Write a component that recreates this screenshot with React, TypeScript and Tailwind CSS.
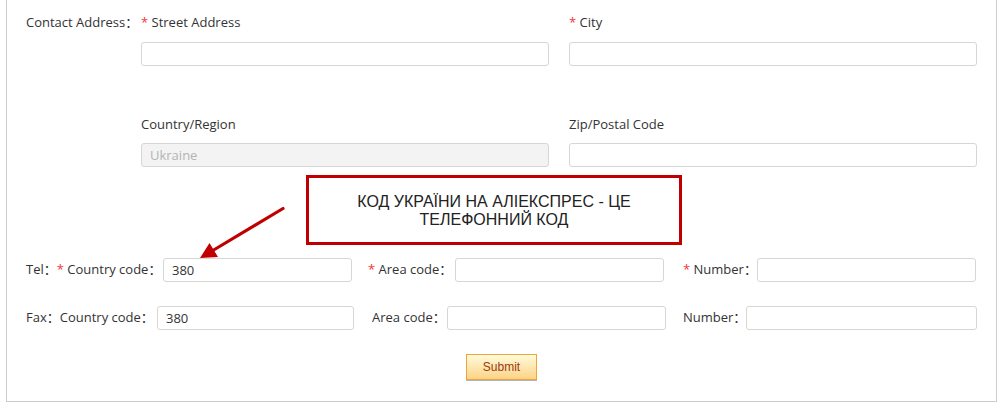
import React from "react";

const font = { fontFamily: "'Open Sans', 'Noto Sans CJK SC', sans-serif" };

function Star() {
  return <span className="text-[#f0353a]">*</span>;
}

function Field({ value, disabled, className }: { value?: string; disabled?: boolean; className?: string }) {
  return (
    <input
      readOnly
      defaultValue={value ?? ""}
      className={
        "h-[24px] rounded-[3px] border border-[#d6d6d6] px-[8px] text-[13px] outline-none " +
        (disabled ? "bg-[#f3f3f3] text-[#b3b3b3] " : "bg-white text-[#333] ") +
        (className ?? "")
      }
    />
  );
}

export default function App() {
  return (
    <div className="relative w-[1004px] h-[409px] bg-white text-[13px] text-[#333]" style={font}>
      <div className="ml-[6px] w-[991px] h-[402px] border-x border-b border-[#cccccc] pl-[19px]">
        {/* Address block */}
        <div className="flex">
          <div className="w-[115px] shrink-0 mt-[12px] leading-[20px] whitespace-nowrap">Contact Address：</div>
          <div className="grid grid-cols-2 gap-x-[20px] w-[836px]">
            <div>
              <div className="mt-[12px] leading-[20px] h-[20px]">
                <Star /> Street Address
              </div>
              <Field className="mt-[10px] w-full block" />
            </div>
            <div>
              <div className="mt-[12px] leading-[20px] h-[20px]">
                <Star /> City
              </div>
              <Field className="mt-[10px] w-full block" />
            </div>
            <div>
              <div className="mt-[48px] leading-[20px] h-[20px]">Country/Region</div>
              <Field value="Ukraine" disabled className="mt-[9px] w-full block" />
            </div>
            <div>
              <div className="mt-[48px] leading-[20px] h-[20px]">Zip/Postal Code</div>
              <Field className="mt-[9px] w-full block" />
            </div>
          </div>
        </div>

        {/* Tel row */}
        <div className="mt-[91px] flex items-center h-[24px] whitespace-nowrap">
          <div className="w-[326px] flex items-center justify-between">
            <span>
              Tel：<Star /> Country code：
            </span>
            <Field value="380" className="w-[189px]" />
          </div>
          <div className="ml-[16px] w-[296px] flex items-center justify-between">
            <span>
              <Star /> Area code：
            </span>
            <Field className="w-[209px]" />
          </div>
          <div className="ml-[19px] w-[293px] flex items-center justify-between">
            <span>
              <Star /> Number：
            </span>
            <Field className="w-[221px]" />
          </div>
        </div>

        {/* Fax row */}
        <div className="mt-[24px] flex items-center h-[24px] whitespace-nowrap">
          <div className="w-[328px] flex items-center justify-between">
            <span>Fax：Country code：</span>
            <Field value="380" className="w-[197px]" />
          </div>
          <div className="ml-[18px] w-[294px] flex items-center justify-between">
            <span>Area code：</span>
            <Field className="w-[219px]" />
          </div>
          <div className="ml-[17px] w-[294px] flex items-center justify-between">
            <span>Number：</span>
            <Field className="w-[231px]" />
          </div>
        </div>

        {/* Submit */}
        <div className="mt-[24px] flex justify-center -ml-[19px]">
          <button
            className="w-[71px] h-[26px] border border-[#f0a53c] bg-linear-to-b from-[#fffbd8] to-[#fcd387] text-[12px] text-[#9a3a12] shadow-[0_1px_0_#b5b5b5]"
            style={{ fontFamily: "'Liberation Sans', Arial, sans-serif" }}
          >
            Submit
          </button>
        </div>
      </div>

      {/* Annotation box */}
      <div
        className="absolute left-[306px] top-[175px] w-[376px] h-[70px] border-[3px] border-[#c00000] bg-white flex flex-col items-center pt-[15px] text-[16px] leading-[18px] text-[#222]"
        style={{ fontFamily: "'Liberation Sans', Arial, sans-serif" }}
      >
        <div>КОД УКРАЇНИ НА АЛІЕКСПРЕС - ЦЕ</div>
        <div>ТЕЛЕФОННИЙ КОД</div>
      </div>

      {/* Arrow */}
      <svg className="absolute left-0 top-0 pointer-events-none" width="1004" height="409" viewBox="0 0 1004 409">
        <line x1="283" y1="208.5" x2="212" y2="251" stroke="#c00000" strokeWidth="3.2" strokeLinecap="round" />
        <polygon points="200,258 209.5,243 218,257" fill="#c00000" />
      </svg>
    </div>
  );
}
